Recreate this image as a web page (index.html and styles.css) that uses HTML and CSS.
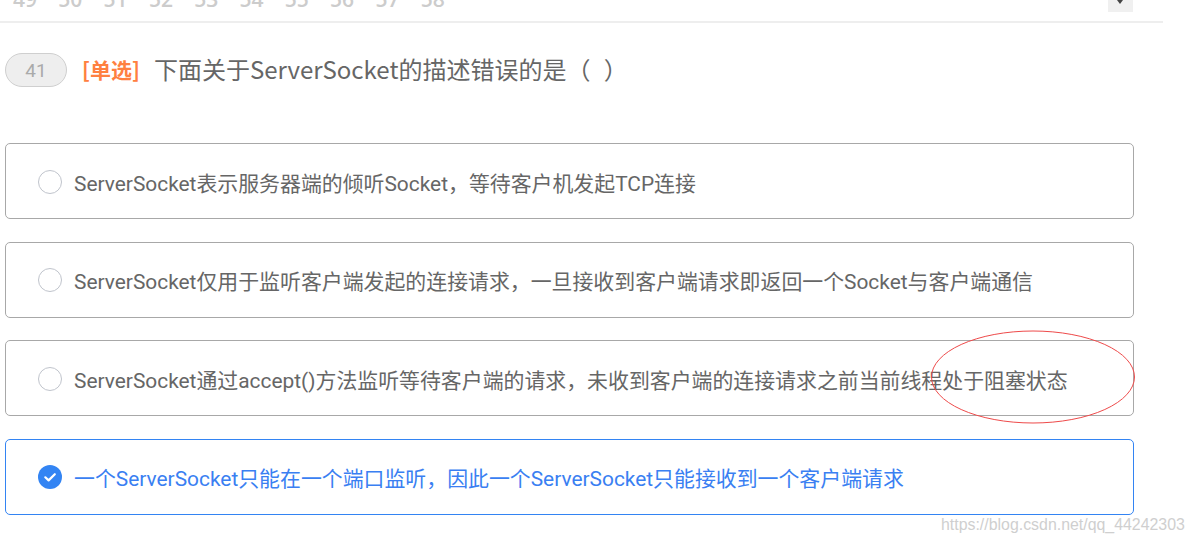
FILE: index.html
```html
<!DOCTYPE html>
<html lang="zh-CN">
<head>
<meta charset="utf-8">
<title>ServerSocket</title>
<link rel="stylesheet" href="styles.css">
</head>
<body>
<div class="page">
  <div class="pager">
    <div class="nums">
      <span>49</span><span>50</span><span>51</span><span>52</span><span>53</span><span>54</span><span>55</span><span>56</span><span>57</span><span>58</span>
    </div>
    <div class="dropdown"><span class="arrow"></span></div>
  </div>
  <div class="question">
    <div class="qhead">
      <span class="badge">41</span>
      <span class="qtype">[单选]</span>
      <span class="qtitle">下面关于ServerSocket的描述错误的是（ ）</span>
    </div>
    <div class="options">
      <div class="option"><span class="radio"></span><span class="otext">ServerSocket表示服务器端的倾听Socket，等待客户机发起TCP连接</span></div>
      <div class="option"><span class="radio"></span><span class="otext">ServerSocket仅用于监听客户端发起的连接请求，一旦接收到客户端请求即返回一个Socket与客户端通信</span></div>
      <div class="option"><span class="radio"></span><span class="otext">ServerSocket通过accept()方法监听等待客户端的请求，未收到客户端的连接请求之前当前线程处于阻塞状态</span></div>
      <div class="option selected"><span class="radio checked"><svg width="24" height="24" viewBox="0 0 24 24"><circle cx="12" cy="12" r="12" fill="#3384f3"/><path d="M7.3 12.3 L10.6 15.4 L16.8 9.2" fill="none" stroke="#fff" stroke-width="2.2" stroke-linecap="round" stroke-linejoin="round"/></svg></span><span class="otext">一个ServerSocket只能在一个端口监听，因此一个ServerSocket只能接收到一个客户端请求</span></div>
    </div>
  </div>
  <svg class="mark" width="210" height="100" viewBox="0 0 210 100"><ellipse cx="104" cy="48" rx="101.5" ry="46" fill="none" stroke="#ee4a4a" stroke-width="1"/></svg>
  <div class="watermark">https://blog.csdn.net/qq_44242303</div>
</div>
</body>
</html>
```

FILE: styles.css
```css
html, body {
  margin: 0;
  padding: 0;
  background: #fff;
}
body {
  font-family: Roboto, "Noto Sans CJK SC", sans-serif;
  text-spacing-trim: space-all;
  font-feature-settings: "chws" 0, "halt" 0;
  width: 1193px;
  height: 544px;
  overflow: hidden;
}
.page {
  position: relative;
  width: 1193px;
  height: 544px;
}
.pager {
  width: 1163px;
  height: 21px;
  border-bottom: 2px solid #eeeeee;
  display: flex;
  justify-content: space-between;
  align-items: flex-start;
  overflow: hidden;
}
.nums {
  display: flex;
  margin-top: -14px;
  padding-left: 13px;
  font-family: "Open Sans", "Noto Sans", sans-serif;
  font-size: 21px;
  font-weight: 600;
  color: #cccccc;
  line-height: 26px;
}
.nums span {
  width: 45.3px;
}
.dropdown {
  width: 25px;
  height: 12px;
  background: #f0f0f0;
  margin-right: 30px;
  position: relative;
}
.arrow {
  position: absolute;
  left: 9px;
  top: 0;
  width: 0;
  height: 0;
  border-left: 3.5px solid transparent;
  border-right: 3.5px solid transparent;
  border-top: 4px solid #444;
}
.question {
  padding-left: 5px;
  width: 1129px;
}
.qhead {
  display: flex;
  align-items: center;
  margin-top: 30px;
  height: 34px;
}
.badge {
  box-sizing: border-box;
  width: 62px;
  height: 34px;
  border: 1px solid #cfcfcf;
  border-radius: 17px;
  background: #eeeeee;
  color: #aaaaaa;
  font-size: 19px;
  display: flex;
  align-items: center;
  justify-content: center;
}
.qtype {
  margin-left: 15px;
  color: #ff8040;
  font-family: "Noto Sans CJK SC", sans-serif;
  font-weight: bold;
  font-size: 21px;
  margin-top: -2px;
}
.qtitle {
  margin-left: 14px;
  color: #666666;
  font-family: "Noto Sans CJK SC", sans-serif;
  font-size: 24px;
  word-spacing: 8px;
  margin-top: -3px;
}
.options {
  margin-top: 56px;
  display: flex;
  flex-direction: column;
  gap: 22.67px;
}
.option {
  box-sizing: border-box;
  height: 76px;
  border: 1px solid #a8a8a8;
  border-radius: 5px;
  display: flex;
  align-items: center;
  padding-left: 32px;
  padding-top: 1px;
}
.radio {
  box-sizing: border-box;
  width: 24px;
  height: 24px;
  border-radius: 50%;
  border: 1.5px solid #c0c4cc;
  flex: none;
}
.radio.checked {
  border: none;
}
.radio svg {
  display: block;
}
.otext {
  margin-left: 12px;
  font-size: 20.9px;
  color: #666666;
  white-space: nowrap;
}
.option.selected {
  border-color: #3384f3;
}
.option.selected .otext {
  color: #3a7ff2;
}
.mark {
  position: absolute;
  left: 929px;
  top: 329px;
}
.watermark {
  position: absolute;
  left: 941px;
  top: 516px;
  font-family: "Liberation Sans", Arial, sans-serif;
  font-size: 15.9px;
  color: #cfcfcf;
}
```
